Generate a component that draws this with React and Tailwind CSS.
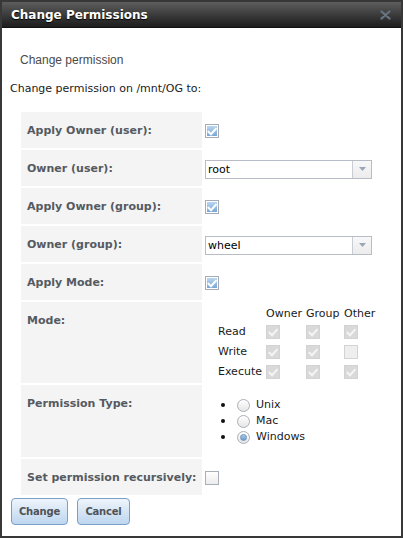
import React from "react";

const font = "font-['DejaVu_Sans',Verdana,sans-serif]";

function CheckMark({ color }) {
  return (
    <svg width="10" height="9" viewBox="0 0 10 9" className="block">
      <path d="M1.5 4.8 L4 7.2 L8.8 1.8" fill="none" stroke={color} strokeWidth="2" strokeLinecap="square" />
    </svg>
  );
}

function Checkbox({ checked }) {
  if (checked) {
    return (
      <span className="w-[14px] h-[14px] border border-[#a3abb7] bg-white p-px flex">
        <span className="flex-1 bg-gradient-to-b from-[#b9d5f0] to-[#79a7d3] flex items-center justify-center">
          <CheckMark color="#ffffff" />
        </span>
      </span>
    );
  }
  return (
    <span className="w-[14px] h-[14px] border border-[#a9afb9] bg-gradient-to-b from-[#ffffff] to-[#ececec] flex" />
  );
}

function DisabledCheck({ checked }) {
  if (checked) {
    return (
      <span className="w-[14px] h-[14px] border border-[#d2d2d2] bg-[#d9d9d9] flex items-center justify-center">
        <CheckMark color="#f4f4f4" />
      </span>
    );
  }
  return <span className="w-[14px] h-[14px] border border-[#d4d4d4] bg-[#eeeeee] flex" />;
}

function Radio({ checked }) {
  return (
    <span className="w-[13px] h-[13px] rounded-full border border-[#a9b0ba] bg-gradient-to-b from-[#ffffff] to-[#e6e6e6] flex items-center justify-center">
      {checked && <span className="w-[7px] h-[7px] rounded-full bg-gradient-to-b from-[#a9c9e8] to-[#6f9dc9] border border-[#6d94bd]" />}
    </span>
  );
}

function Select({ value }) {
  return (
    <div className="w-[167px] h-[19px] border border-[#b7bcc6] bg-white flex">
      <div className="flex-1 pl-[2px] text-[11px] leading-[17px] text-black">{value}</div>
      <div className="w-[19px] border-l border-[#c8ccd3] bg-gradient-to-b from-[#f8f8f8] to-[#ececec] flex items-center justify-center">
        <svg width="7" height="4" viewBox="0 0 7 4"><path d="M0 0 H7 L3.5 4 Z" fill="#9aa6b6" /></svg>
      </div>
    </div>
  );
}

function Label({ children }) {
  return (
    <div className="bg-[#f4f4f4] pl-[6px] pt-[12px] text-[11px] leading-[14px] font-bold text-[#555a61] whitespace-nowrap">
      {children}
    </div>
  );
}

function Row({ label, h, children, align = "center" }) {
  const hc = {
    36: "h-[36px]",
    81: "h-[81px]",
    72: "h-[72px]",
  }[h];
  return (
    <div className={`grid grid-cols-[181px_1fr] gap-[2px] ${hc}`}>
      <Label>{label}</Label>
      <div className={align === "center" ? "pl-px pt-[2px] flex items-center" : "pl-px"}>{children}</div>
    </div>
  );
}

function Button({ children, w }) {
  return (
    <button className={`${w} h-[27px] rounded-[4px] border border-[#7b9fc6] bg-gradient-to-b from-[#eef4fb] to-[#bdd6ef] text-[10px] font-bold tracking-[-0.2px] text-[#4f5256] flex items-center justify-center`}>
      {children}
    </button>
  );
}

export default function App() {
  const grid = [
    ["Read", true, true, true],
    ["Write", true, true, false],
    ["Execute", true, true, true],
  ];
  return (
    <div className={`w-[403px] h-[538px] border-2 border-[#383838] bg-white flex flex-col ${font}`}>
      <div className="h-[26px] bg-gradient-to-b from-[#5e5e5e] via-[#3c3c3c] to-[#1d1d1d] border-b border-[#111] flex items-center justify-between pl-[9px] pr-[10px]">
        <span className="text-[12px] font-bold text-white [text-shadow:0_1px_1px_#000]">Change Permissions</span>
        <svg width="11" height="10" viewBox="0 0 11 10">
          <path d="M1.5 1.5 L9.5 8.5 M9.5 1.5 L1.5 8.5" stroke="#56616c" strokeWidth="2.6" strokeLinecap="round" />
          <path d="M1.5 1.5 L9.5 8.5 M9.5 1.5 L1.5 8.5" stroke="#74828f" strokeWidth="1" strokeLinecap="round" />
        </svg>
      </div>

      <div className="pl-[18px] mt-[25px] font-['Liberation_Sans',Arial,sans-serif] text-[12px] leading-[14px] text-[#4a4a4a]">
        Change permission
      </div>
      <div className="pl-[8px] mt-[15px] text-[11px] leading-[14px] text-[#1a1a1a]">
        Change permission on /mnt/OG to:
      </div>

      <div className="ml-[19px] mt-[16px] w-[360px] flex flex-col gap-[2px]">
        <Row label="Apply Owner (user):" h={36}><Checkbox checked /></Row>
        <Row label="Owner (user):" h={36}><Select value="root" /></Row>
        <Row label="Apply Owner (group):" h={36}><Checkbox checked /></Row>
        <Row label="Owner (group):" h={36}><Select value="wheel" /></Row>
        <Row label="Apply Mode:" h={36}><Checkbox checked /></Row>
        <Row label="Mode:" h={81} align="top">
          <div className="pl-[13px] pt-[3px] grid grid-cols-[48px_40px_38px_34px] text-[11px] text-[#1a1a1a]">
            <div className="h-[17px]" />
            <div className="h-[17px] leading-[17px]">Owner</div>
            <div className="h-[17px] leading-[17px]">Group</div>
            <div className="h-[17px] leading-[17px]">Other</div>
            {grid.map(([name, a, b, c]) => (
              <React.Fragment key={name}>
                <div className="h-[20px] leading-[20px]">{name}</div>
                <div className="h-[20px] flex items-center"><DisabledCheck checked={a} /></div>
                <div className="h-[20px] flex items-center"><DisabledCheck checked={b} /></div>
                <div className="h-[20px] flex items-center"><DisabledCheck checked={c} /></div>
              </React.Fragment>
            ))}
          </div>
        </Row>
        <Row label="Permission Type:" h={72} align="top">
          <div className="pt-[12px] pl-[16px] flex flex-col text-[11px] text-[#1a1a1a]">
            {[["Unix", false], ["Mac", false], ["Windows", true]].map(([n, c]) => (
              <div key={n} className="h-[16px] flex items-center">
                <span className="w-[4px] h-[4px] rounded-full bg-[#111] mr-[12px]" />
                <Radio checked={c} />
                <span className="ml-[6px] leading-[16px]">{n}</span>
              </div>
            ))}
          </div>
        </Row>
        <Row label="Set permission recursively:" h={36}><Checkbox checked={false} /></Row>
      </div>

      <div className="ml-[9px] mt-[3px] flex gap-[9px]">
        <Button w="w-[57px]">Change</Button>
        <Button w="w-[53px]">Cancel</Button>
      </div>
    </div>
  );
}
